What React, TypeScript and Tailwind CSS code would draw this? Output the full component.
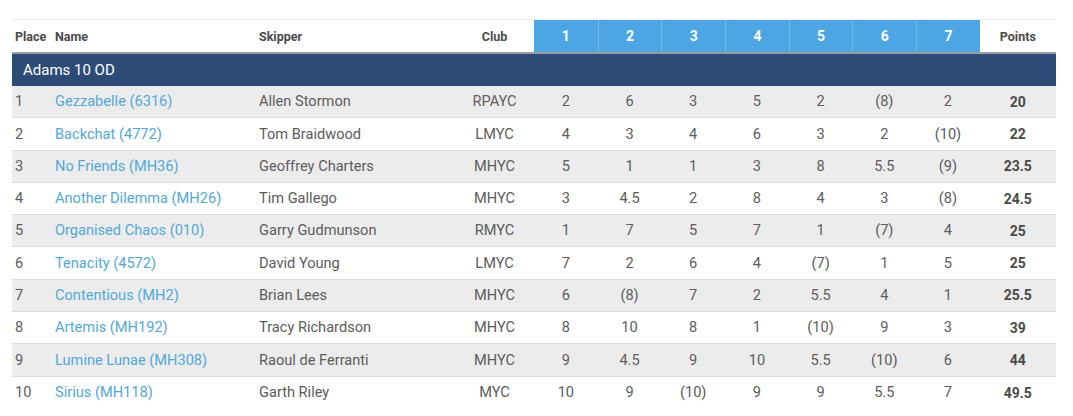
const RACES = ['1', '2', '3', '4', '5', '6', '7']

const ROWS: [string, string, string, string, string[], string][] = [
  ['1', 'Gezzabelle (6316)', 'Allen Stormon', 'RPAYC', ['2', '6', '3', '5', '2', '(8)', '2'], '20'],
  ['2', 'Backchat (4772)', 'Tom Braidwood', 'LMYC', ['4', '3', '4', '6', '3', '2', '(10)'], '22'],
  ['3', 'No Friends (MH36)', 'Geoffrey Charters', 'MHYC', ['5', '1', '1', '3', '8', '5.5', '(9)'], '23.5'],
  ['4', 'Another Dilemma (MH26)', 'Tim Gallego', 'MHYC', ['3', '4.5', '2', '8', '4', '3', '(8)'], '24.5'],
  ['5', 'Organised Chaos (010)', 'Garry Gudmunson', 'RMYC', ['1', '7', '5', '7', '1', '(7)', '4'], '25'],
  ['6', 'Tenacity (4572)', 'David Young', 'LMYC', ['7', '2', '6', '4', '(7)', '1', '5'], '25'],
  ['7', 'Contentious (MH2)', 'Brian Lees', 'MHYC', ['6', '(8)', '7', '2', '5.5', '4', '1'], '25.5'],
  ['8', 'Artemis (MH192)', 'Tracy Richardson', 'MHYC', ['8', '10', '8', '1', '(10)', '9', '3'], '39'],
  ['9', 'Lumine Lunae (MH308)', 'Raoul de Ferranti', 'MHYC', ['9', '4.5', '9', '10', '5.5', '(10)', '6'], '44'],
  ['10', 'Sirius (MH118)', 'Garth Riley', 'MYC', ['10', '9', '(10)', '9', '9', '5.5', '7'], '49.5'],
]

const GRID = 'grid grid-cols-[41px_204px_198px_79px_repeat(7,63.7px)_76px]'

export default function App() {
  return (
    <div className="w-[1073px] h-[416px] bg-white overflow-hidden pt-[19px] pl-3 font-['Roboto',sans-serif]">
      <div className="w-[1044px]">
        {/* Header row */}
        <div className={`${GRID} h-[35px] border-t border-[#eeeeee] border-b-2 border-b-[#9a9ea4] text-[12.5px] font-bold text-[#4a4a4a]`}>
          <div className="flex items-center pl-[3px] pt-[3px]">Place</div>
          <div className="flex items-center pl-[2px] pt-[3px]">Name</div>
          <div className="flex items-center pl-[2px] pt-[3px]">Skipper</div>
          <div className="flex items-center justify-center pt-[3px]">Club</div>
          {RACES.map((r, i) => (
            <div
              key={r}
              className={`flex items-center justify-center bg-[#4ba6e3] text-white text-[14px] ${i > 0 ? 'border-l border-[#72b9ea]' : ''}`}
            >
              {r}
            </div>
          ))}
          <div className="flex items-center justify-center pt-[3px]">Points</div>
        </div>

        {/* Group row */}
        <div className="h-8 bg-[#2d4b77] flex items-center pl-[11px] text-white text-[15px]">
          Adams 10 OD
        </div>

        {/* Result rows */}
        {ROWS.map(([place, name, skipper, club, scores, points], idx) => (
          <div
            key={place}
            className={`${GRID} h-[32.3px] text-[14.6px] text-[#5c5c5c] ${idx < ROWS.length - 1 ? 'border-b border-[#dcdcdc]' : ''} ${idx % 2 === 0 ? 'bg-[#ececec]' : 'bg-white'}`}
          >
            <div className="flex items-center pl-[3px] pt-[1px]">{place}</div>
            <div className="flex items-center pl-[2px] pt-[1px] text-[#53a8d8]">{name}</div>
            <div className="flex items-center pl-[2px] pt-[1px]">{skipper}</div>
            <div className="flex items-center justify-center pt-[1px]">{club}</div>
            {scores.map((s, i) => (
              <div key={i} className="flex items-center justify-center pt-[1px]">
                {s}
              </div>
            ))}
            <div className="flex items-center justify-center pt-[1px] font-bold text-[#4a4a4a] text-[14px]">{points}</div>
          </div>
        ))}
      </div>
    </div>
  )
}
